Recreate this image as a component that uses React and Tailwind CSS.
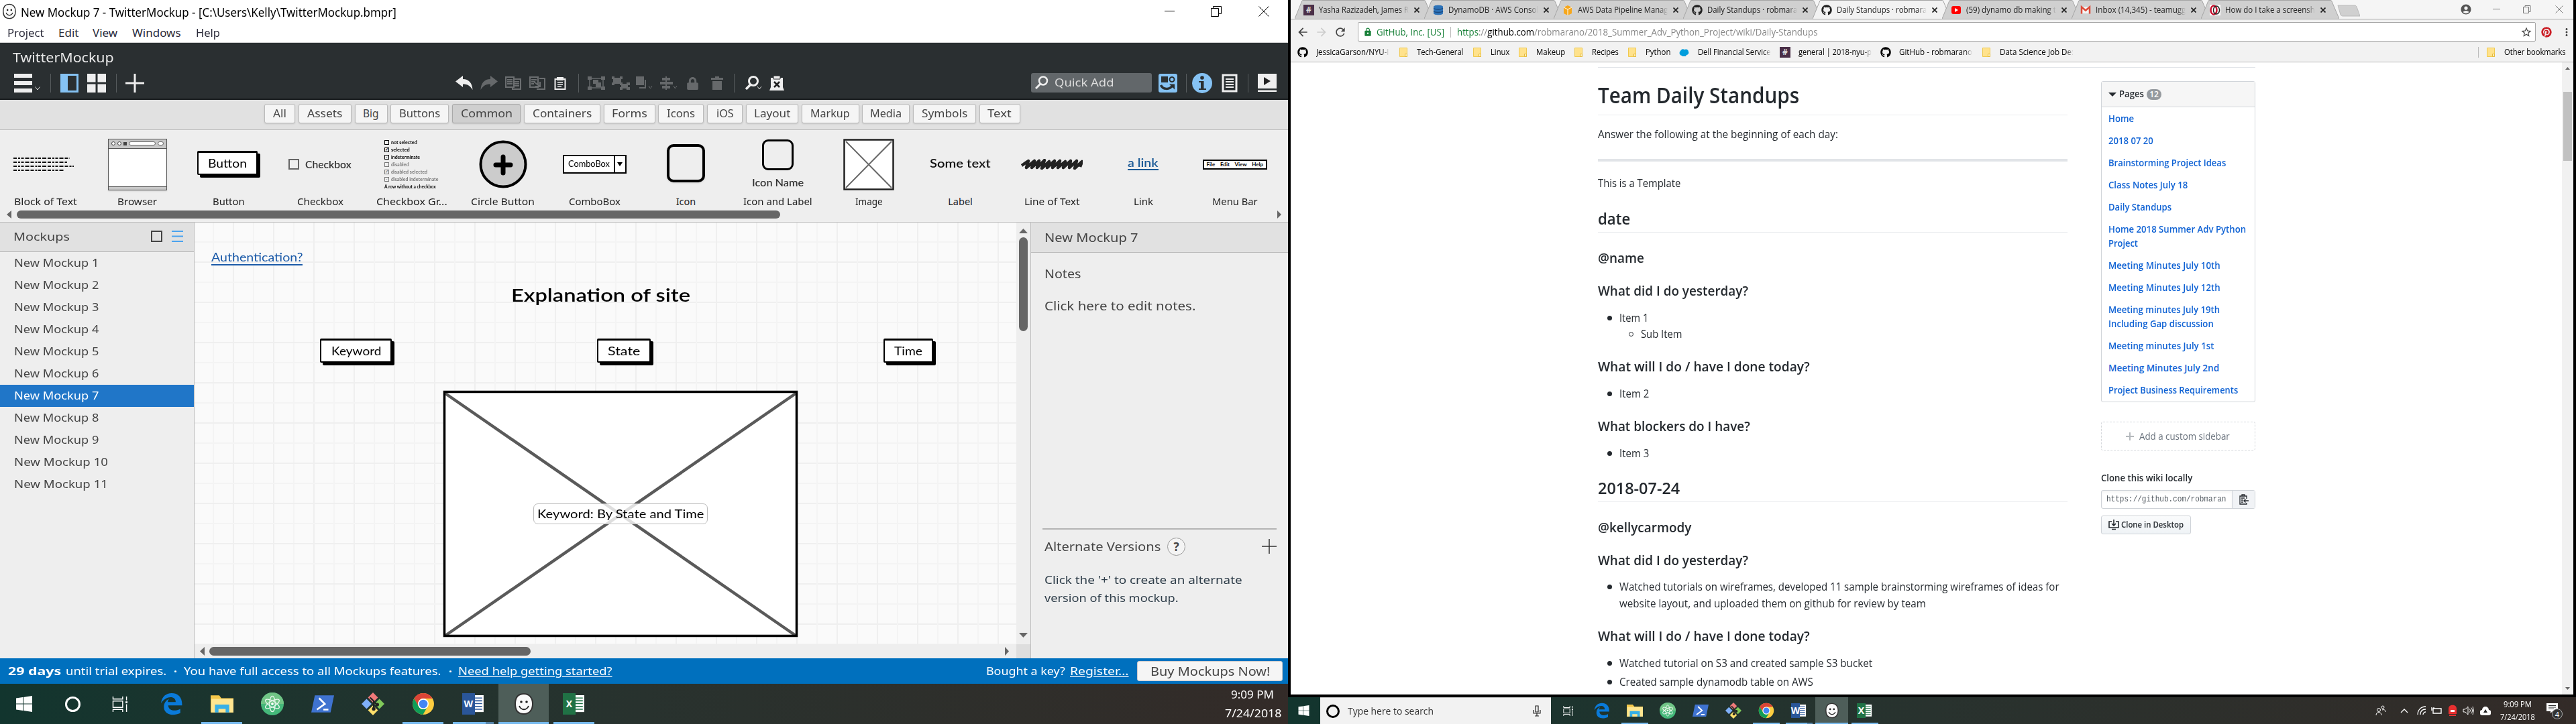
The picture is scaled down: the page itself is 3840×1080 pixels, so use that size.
import React, { useLayoutEffect, useRef } from "react";
import { FaGithub, FaPinterest, FaLock } from "react-icons/fa";
import { MdLock, MdAccountCircle, MdStarBorder, MdRefresh, MdArrowBack, MdArrowForward, MdMoreVert } from "react-icons/md";

/* A line of text that is condensed or stretched to the width of its own box. */
function T({ className = "", children }) {
  const outer = useRef(null);
  const inner = useRef(null);
  useLayoutEffect(() => {
    const natural = inner.current.offsetWidth;
    if (natural) inner.current.style.transform = `scaleX(${outer.current.clientWidth / natural})`;
  }, [children]);
  return (
    <span ref={outer} className={"block shrink-0 whitespace-nowrap " + className}>
      <span ref={inner} className="inline-block origin-left">{children}</span>
    </span>
  );
}

const Svg = ({ className, box, children, ...rest }) => (
  <svg className={"block shrink-0 " + className} viewBox={box} fill="none" {...rest}>{children}</svg>
);
const Sep = ({ className }) => <div className={"h-7 w-px shrink-0 bg-[#565b5d] " + className} />;

function Smiley({ className }) {
  return (
    <Svg className={className} box="0 0 30 34">
      <path d="M15 2C7 2 2 7 2 17s5 15 13 15 13-6 13-15S23 2 15 2z" fill="#fafafa" stroke="#333" strokeWidth="2" />
      <circle cx="11" cy="14" r="1.8" fill="#222" />
      <circle cx="19" cy="14" r="1.8" fill="#222" />
      <path d="M8 20c3 7 11 7 14 0" stroke="#222" strokeWidth="1.8" />
    </Svg>
  );
}

/* ---------- Mockups window ---------- */

function TitleAndMenu() {
  return (
    <>
      <div className="flex h-[34px] items-center pl-[3px] text-[18px] text-black">
        <Smiley className="h-[24px] w-[22px]" />
        <T className="ml-[6px] mt-[3px] w-[560px]">New Mockup 7 - TwitterMockup - [C:\Users\Kelly\TwitterMockup.bmpr]</T>
        <Svg className="ml-[1145px] h-4 w-4" box="0 0 16 16"><path d="M0 7.5h15" stroke="#000" /></Svg>
        <Svg className="ml-[53px] h-4 w-4" box="0 0 16 16"><path d="M.5 3.5h11v12H.5zM3.5 3V.5h12v11H12" stroke="#000" /></Svg>
        <Svg className="ml-[55px] h-4 w-4" box="0 0 16 16"><path d="M.5.5l15 15M15.5.5l-15 15" stroke="#000" /></Svg>
      </div>
      <div className="flex h-[30px] items-center border-b border-[#ccc] pl-[11px] text-[17px] text-[#2b2b3a]">
        <T className="w-[55px]">Project</T>
        <T className="ml-[21px] w-[30px]">Edit</T>
        <T className="ml-[21px] w-[37px]">View</T>
        <T className="ml-[22px] w-[73px]">Windows</T>
        <T className="ml-[22px] w-[36px]">Help</T>
      </div>
    </>
  );
}

function Toolbar() {
  return (
    <div className="h-[85px] border-b-2 border-[#191d1f] bg-[#2a2f31]">
      <div className="flex h-[44px] items-center pl-[19px] text-[20px] text-[#e8e8e8]">
        <T className="w-[151px]">TwitterMockup</T>
      </div>
      <div className="flex h-8 items-center pl-[21px]">
        <Svg className="h-7 w-[27px]" box="0 0 27 28"><path d="M0 0h27v6H0zM0 11h27v6H0zM0 22h27v6H0z" fill="#eee" /></Svg>
        <Svg className="ml-1 mt-4 h-2 w-2" box="0 0 8 8"><path d="M.5 1.5L4 6l3.5-4.5" stroke="#ddd" /></Svg>
        <Sep className="ml-[15px]" />
        <Svg className="ml-[14px] h-7 w-[27px]" box="0 0 27 28"><path d="M0 0h27v28H0z" fill="#85c2f3" /><path d="M11 3h13v22H11z" fill="#2a2f31" /></Svg>
        <Svg className="ml-[13px] h-7 w-7" box="0 0 28 28"><path d="M0 0h12.5v12.5H0zM15.500 0H28v12.5H15.500zM0 15.500h12.5V28H0zM15.500 15.500H28V28H15.500z" fill="#eee" /></Svg>
        <Sep className="ml-[15px]" />
        <Svg className="ml-[13px] h-7 w-7" box="0 0 28 28"><path d="M14 0v28M0 14h28" stroke="#eee" strokeWidth="3" /></Svg>
        <Svg className="ml-[464px] h-[22px] w-[26px]" box="0 0 26 22"><path d="M0 8.5L11 0v5c9 0 14 6 14.500 16C22 15 18 12.5 11 12.5V17z" fill="#eee" /></Svg>
        <Svg className="ml-[11px] h-[22px] w-[26px]" box="0 0 26 22"><path d="M26 8.5L15 0v5C6 5 1 11 .5 21 4 15 8 12.5 15 12.5V17z" fill="#66696b" /></Svg>
        <Svg className="ml-[11px] h-5 w-6" box="0 0 24 20"><path d="M1 1h12v15H1zM13 4h10v15H11v-3M3 5h8M3 8h8M3 11h8M14 8h7M14 11h7M14 14h7" stroke="#6b6e70" strokeWidth="2" /></Svg>
        <Svg className="ml-3 h-5 w-6" box="0 0 24 20"><path d="M1 1h12v15H1zM15 3h8v16H11M3 5h8M3 8h6M3 11h4M7 8l9 7M16 8v7H9" stroke="#6b6e70" strokeWidth="2" /></Svg>
        <Svg className="ml-[13px] h-5 w-[18px]" box="0 0 18 20"><path d="M1.5 4h15v15h-15z" stroke="#eee" strokeWidth="2" /><path d="M4 1h10v5H4z" fill="#eee" /><path d="M5 9h8M5 12h8M5 15h6" stroke="#eee" strokeWidth="1.5" /></Svg>
        <Sep className="ml-[18px]" />
        <Svg className="ml-[13px] h-5 w-[26px]" box="0 0 26 20"><path d="M3 3h20v14H3z" stroke="#66696b" strokeWidth="1.5" /><path d="M0 0h6v5H0zM20 0h6v5h-6zM0 15h6v5H0zM20 15h6v5h-6zM8 5h8v6H8zM12 9h8v7h-8z" fill="#66696b" /></Svg>
        <Svg className="ml-[10px] h-5 w-[27px]" box="0 0 27 20"><path d="M2 2h12v9H2zM14 11h10v7H14z" fill="#66696b" /><path d="M0 0h4v4H0zM12 0h4v4h-4zM0 9h4v4H0zM12 9h4v4h-4zM22 9h5v4h-5zM12 16h4v4h-4zM22 16h5v4h-5z" fill="#66696b" /></Svg>
        <Svg className="ml-[9px] h-5 w-[26px]" box="0 0 26 20"><path d="M0 0h12v13H0z" fill="#66696b" /><path d="M14 5v12H5" stroke="#66696b" strokeWidth="2" /><path d="M19 14l2.500 4 2.500-4" stroke="#66696b" /></Svg>
        <Svg className="ml-[10px] h-5 w-[26px]" box="0 0 26 20"><path d="M9 0v20" stroke="#66696b" strokeWidth="2" /><path d="M3 2h12v4H3zM0 8h19v4H0zM3 14h12v4H3z" fill="#66696b" /><path d="M20 14l2.500 4 2.500-4" stroke="#66696b" /></Svg>
        <FaLock className="ml-[13px] h-[19px] w-[19px] shrink-0 text-[#66696b]" />
        <Svg className="ml-[18px] h-5 w-[18px]" box="0 0 18 20"><path d="M0 2h18v3H0zM6 0h6v2H6zM2 7h14v13H2z" fill="#66696b" /></Svg>
        <Sep className="ml-4" />
        <Svg className="ml-[15px] h-[22px] w-[26px]" box="0 0 26 22"><circle cx="13" cy="8" r="6.5" stroke="#eee" strokeWidth="3" /><path d="M9 13l-7 7" stroke="#eee" strokeWidth="3.5" /><path d="M19 16l3 4 3-4" stroke="#ddd" /></Svg>
        <Svg className="ml-[11px] h-[22px] w-[22px]" box="0 0 22 22"><path d="M2 3h18v14l2 5H0l2-5z" fill="#eee" /><path d="M6 0h10v5H6z" fill="#eee" stroke="#2a2f31" /><path d="M7 9l8 8M15 9l-8 8" stroke="#222" strokeWidth="2.5" /></Svg>
        <div className="-mt-[2px] ml-[368px] flex h-[29px] w-[180px] shrink-0 items-center rounded-[3px] bg-[#62676a] pl-[6px] text-[17px] text-[#ddd]">
          <Svg className="h-5 w-5" box="0 0 20 20"><circle cx="12" cy="7.5" r="6" stroke="#eee" strokeWidth="2.5" /><path d="M8 12l-7 7" stroke="#eee" strokeWidth="3" /></Svg>
          <T className="ml-[9px] w-[89px]">Quick Add</T>
        </div>
        <Svg className="ml-[10px] h-7 w-7" box="0 0 28 28"><rect width="28" height="28" rx="3" fill="#85c2f3" /><path d="M4 4h10v9H4z" fill="#2a2f31" /><circle cx="20" cy="8.5" r="3.500" stroke="#2a2f31" strokeWidth="2" /><path d="M3.500 17c3 7 13 7 17 1" stroke="#2a2f31" strokeWidth="3.500" /><path d="M16 15.500h8v8z" fill="#2a2f31" /></Svg>
        <Sep className="ml-[13px]" />
        <Svg className="ml-2 h-[30px] w-[30px]" box="0 0 30 30"><circle cx="15" cy="15" r="15" fill="#85c2f3" /><circle cx="15" cy="7" r="2.8" fill="#2a2f31" /><path d="M10 12h7.500v11H21v2H10v-2h3v-9h-3z" fill="#2a2f31" /></Svg>
        <Svg className="ml-[14px] h-7 w-6" box="0 0 24 28"><path d="M2 2h20v24H2z" stroke="#eee" strokeWidth="3" /><path d="M6 8h12M6 12h12M6 16h12M6 20h12" stroke="#eee" strokeWidth="2" /></Svg>
        <Sep className="ml-[15px]" />
        <Svg className="ml-[14px] h-7 w-7" box="0 0 28 28"><path d="M0 0h28v22H0zM0 24.500h28V27H0z" fill="#eee" /><path d="M9 5l10 6-10 6z" fill="#222" /></Svg>
      </div>
    </div>
  );
}

const categories = [
  ["All", "w-[46px]", "w-[20px]"],
  ["Assets", "w-[79px]", "w-[53px]"],
  ["Big", "w-[49px]", "w-[24px]"],
  ["Buttons", "w-[87px]", "w-[61px]"],
  ["Common", "w-[102px]", "w-[77px]"],
  ["Containers", "w-[114px]", "w-[88px]"],
  ["Forms", "w-[77px]", "w-[53px]"],
  ["Icons", "w-[68px]", "w-[42px]"],
  ["iOS", "w-[53px]", "w-[26px]"],
  ["Layout", "w-[78px]", "w-[54px]"],
  ["Markup", "w-[86px]", "w-[59px]"],
  ["Media", "w-[71px]", "w-[47px]"],
  ["Symbols", "w-[94px]", "w-[68px]"],
  ["Text", "w-[61px]", "w-[36px]"],
];

function Categories() {
  return (
    <div className="flex h-[45px] items-start gap-[4.75px] border-b border-[#bdbdbd] bg-[#e1e1e1] pl-[394px] pt-[6px] text-[15.5px] text-[#444]">
      {categories.map(([name, box, text]) => (
        <div
          key={name}
          className={
            "flex h-[29px] shrink-0 items-center justify-center rounded-[3px] border shadow-sm " +
            box +
            (name === "Common" ? " border-[#a9a9a9] bg-[#cfcfcf] shadow-inner" : " border-[#bbb] bg-[#f5f5f5]")
          }
        >
          <T className={text}>{name}</T>
        </div>
      ))}
    </div>
  );
}

function SketchButton({ box, text, children }) {
  return (
    <div className={"flex items-center justify-center rounded-[2px] border-2 border-t-[3px] border-black bg-white shadow-[4px_4px_0_0_#000] " + box}>
      <T className={text}>{children}</T>
    </div>
  );
}

const groupRows = [
  ["not selected", "w-[39px]", "text-black", ""],
  ["selected", "w-[28px]", "text-black", "✓"],
  ["indeterminate", "w-[43px]", "text-black", "-"],
  ["disabled", "w-[27px]", "text-[#777]", ""],
  ["disabled selected", "w-[54px]", "text-[#777]", "✓"],
  ["disabled indeterminate", "w-[70px]", "text-[#777]", "-"],
];

const library = [
  ["Block of Text", "w-[94px]",
    <Svg key="a" className="-ml-[6px] h-6 w-[90px]" box="0 0 90 24"><path d="M0 3h84M0 9h80M0 15h90M0 21h76" stroke="#111" strokeWidth="2.2" strokeDasharray="5 2 3 1.5 4 2 6 2" /></Svg>],
  ["Browser", "w-[59px]",
    <div key="a" className="flex h-[77px] w-[88px] flex-col justify-between border border-[#555] bg-white shadow">
      <div className="flex h-[14px] items-center gap-[3px] border-b border-[#555] bg-[#c8c8c8] px-1">
        <i className="size-[6px] rounded-full border border-[#444] bg-white" />
        <i className="size-[6px] rounded-full border border-[#444] bg-white" />
        <i className="size-[5px] bg-[#444]" />
        <i className="h-1.5 w-[40px] rounded-sm border border-[#666] bg-white" />
        <i className="h-1.5 w-[9px] rounded-sm border border-[#666] bg-white" />
      </div>
      <div className="h-[5px] border-t border-[#555] bg-[#c8c8c8]" />
    </div>],
  ["Button", "w-[48px]",
    <div key="a" className="-ml-1 pb-1 font-['Lato'] text-[17px] text-black"><SketchButton box="h-[36px] w-[90px]" text="w-[58px]">Button</SketchButton></div>],
  ["Checkbox", "w-[69px]",
    <div key="a" className="flex items-center gap-[9px] font-['Lato'] text-[15px] font-semibold text-[#333]"><i className="size-[16px] border-2 border-[#666]" /><T className="w-[69px]">Checkbox</T></div>],
  ["Checkbox Gr...", "w-[106px]",
    <div key="a" className="flex w-[82px] flex-col font-['Lato'] text-[8px] font-bold leading-[11px] text-black">
      {groupRows.map(([t, w, c, m]) => (
        <div key={t} className={"flex items-center gap-[3px] " + c}>
          <i className="flex size-[7px] items-center justify-center border border-current text-[6px] not-italic leading-none">{m}</i>
          <T className={w}>{t}</T>
        </div>
      ))}
      <T className="w-[77px]">A row without a checkbox</T>
    </div>],
  ["Circle Button", "w-[95px]",
    <Svg key="a" className="h-[72px] w-[72px]" box="0 0 72 72"><circle cx="36" cy="36" r="33.5" fill="#ccc" stroke="#000" strokeWidth="4" /><path d="M36 25v24M25 37h22" stroke="#000" strokeWidth="7" strokeLinecap="round" /></Svg>],
  ["ComboBox", "w-[77px]",
    <div key="a" className="flex h-[28px] w-[95px] items-center border-2 border-black bg-white pl-[6px] font-['Lato'] text-[13px] text-black">
      <T className="w-[62px]">ComboBox</T>
      <div className="ml-[6px] flex h-full w-[18px] items-center justify-center border-l-2 border-black"><Svg className="h-[6px] w-2" box="0 0 8 6"><path d="M0 0h8L4 6z" fill="#000" /></Svg></div>
    </div>],
  ["Icon", "w-[30px]", <div key="a" className="-mt-1 h-[57px] w-[57px] rounded-[10px] border-4 border-black shadow" />],
  ["Icon and Label", "w-[103px]",
    <div key="a" className="flex flex-col items-center gap-2 font-['Lato'] text-[15px] font-semibold leading-[20px] text-[#333]"><i className="h-[46px] w-[47px] rounded-[9px] border-[3.5px] border-black" /><T className="w-[77px]">Icon Name</T></div>],
  ["Image", "w-[41px]",
    <Svg key="a" className="h-[77px] w-[76px]" box="0 0 76 77"><path d="M1.5 1.5h73v74h-73z" fill="#fff" stroke="#222" strokeWidth="2.5" /><path d="M4 4l68 69M72 4L4 73" stroke="#666" strokeWidth="2" /></Svg>],
  ["Label", "w-[37px]", <T key="a" className="-mt-[3px] w-[91px] font-['Lato'] text-[18px] font-semibold text-[#111]">Some text</T>],
  ["Line of Text", "w-[83px]",
    <Svg key="a" className="h-4 w-[92px]" box="0 0 92 16"><path d="M1 10L11 3 8 13 20 3 16 13 27 3 24 13 35 2 31 14 42 4 39 13 50 3 47 13 58 3 55 13 66 4 63 13 74 3 72 13 83 3 80 14 91 4 88 12" stroke="#222" strokeWidth="4.5" strokeLinejoin="round" /></Svg>],
  ["Link", "w-[29px]", <T key="a" className="-mt-1 w-[46px] border-b-2 border-[#1b5a96] font-['Lato'] text-[17px] font-semibold leading-[19px] text-[#1b5a96]">a link</T>],
  ["Menu Bar", "w-[68px]",
    <div key="a" className="flex h-[15px] w-[96px] items-center justify-around border-2 border-black bg-white font-['Lato'] text-[8px] font-bold leading-none text-black"><span>File</span><span>Edit</span><span>View</span><span>Help</span></div>],
];

const Arrow = ({ className, d }) => <Svg className={className} box="0 0 12 12" preserveAspectRatio="none"><path d={d} fill="#666" /></Svg>;
const LEFT = "M12 0v12L0 6z";
const RIGHT = "M0 0v12l12-6z";
const UP = "M0 12h12L6 0z";
const DOWN = "M0 0h12L6 12z";

function Library() {
  return (
    <div className="h-[138px] border-b border-[#bdbdbd] bg-[#eee]">
      <div className="grid w-[1909px] grid-cols-14 pt-3">
        {library.map(([name, w, art]) => (
          <div key={name} className="flex flex-col items-center">
            <div className="flex h-[78px] items-center">{art}</div>
            <T className={"mt-[6px] text-[14.5px] leading-[20px] text-[#222] " + w}>{name}</T>
          </div>
        ))}
      </div>
      <div className="mt-1 flex h-3 items-center pl-[10px]">
        <Arrow className="h-3 w-[7px]" d={LEFT} />
        <div className="ml-2 h-3 w-[1138px] rounded-full bg-[#666]" />
        <Arrow className="ml-[741px] h-3 w-[6px]" d={RIGHT} />
      </div>
    </div>
  );
}

const mockups = [1, 2, 3, 4, 5, 6, 7, 8, 9, 10, 11];

function MockupList() {
  return (
    <div className="w-[290px] shrink-0 border-r border-[#bdbdbd] bg-[#eee]">
      <div className="flex h-[44px] items-center border-b border-[#b9b9b9] bg-[#e1e1e1] pl-5 text-[17px] text-[#444]">
        <T className="-mt-[2px] w-[84px]">Mockups</T>
        <div className="-mt-[3px] ml-[121px] h-[17px] w-[17px] border-2 border-[#444]" />
        <Svg className="-mt-[3px] ml-[14px] h-[17px] w-[17px]" box="0 0 17 17"><path d="M0 1h17M0 8.5h17M0 16h17" stroke="#4ba3ee" strokeWidth="2" /></Svg>
      </div>
      <div className="text-[16.5px] text-[#444]">
        {mockups.map((n) => (
          <div key={n} className={"flex h-[33px] items-center pl-[21px] " + (n === 7 ? "bg-[#2076c8] text-white" : "")}>
            <T className={n > 9 ? "w-[140px]" : "w-[127px]"}>New Mockup {n}</T>
          </div>
        ))}
      </div>
    </div>
  );
}

const gridLines = Array.from({ length: 41 }, (_, i) => i);

function Canvas() {
  return (
    <div className="flex w-[1247px] shrink-0 flex-col">
      <div className="flex h-[629px]">
        <div className="relative w-[1225px] shrink-0 overflow-hidden bg-[#fafafa] font-['Lato'] text-black">
          <Svg className="h-[629px] w-[1225px]" box="0 0 1225 629">
            {gridLines.map((i) => (
              <g key={i} stroke={i % 2 ? "#efefef" : "#f4f4f4"} strokeWidth="2">
                <path d={`M${28 + i * 30} 0v629`} />
                {i < 21 && <path d={`M0 ${29 + i * 30}h1225`} />}
              </g>
            ))}
            <path d="M372.5 252.5h525v364h-525z" fill="#fff" />
            <path d="M374 255l522 361M896 255L374 616" stroke="#5a5a5a" strokeWidth="4.5" />
            <path d="M372.5 252.5h525v364h-525z" stroke="#000" strokeWidth="3.5" />
          </Svg>
          <T className="absolute left-[25px] top-[41px] w-[136px] border-b-2 border-[#1b5aa8] text-[17px] leading-[21px] text-[#1b5aa8]">Authentication?</T>
          <T className="absolute left-[472px] top-[92px] w-[267px] text-[27px] font-semibold leading-[32px]">Explanation of site</T>
          <div className="absolute left-[187px] top-[173px] text-[17px]"><SketchButton box="h-[36px] w-[107px]" text="w-[74px]">Keyword</SketchButton></div>
          <div className="absolute left-[600px] top-[173px] text-[17px]"><SketchButton box="h-[36px] w-[80px]" text="w-[48px]">State</SketchButton></div>
          <div className="absolute left-[1027px] top-[173px] text-[17px]"><SketchButton box="h-[36px] w-[74px]" text="w-[42px]">Time</SketchButton></div>
          <div className="absolute left-[505px] top-[419px] flex h-[31px] w-[260px] items-center rounded-[7px] border border-[#bbb] bg-white/80 pl-[5px] text-[17px]">
            <T className="w-[248px]">Keyword: By State and Time</T>
          </div>
        </div>
        <div className="flex flex-1 flex-col items-center border-r border-[#bdbdbd] bg-[#eee] pt-[9px]">
          <Arrow className="h-[7px] w-[13px]" d={UP} />
          <div className="mt-[6px] h-[140px] w-[13px] rounded-full bg-[#666]" />
          <Arrow className="mt-[450px] h-[7px] w-[13px]" d={DOWN} />
        </div>
      </div>
      <div className="flex h-[21px] items-center bg-[#eee] pl-2">
        <Arrow className="h-[13px] w-[7px]" d={LEFT} />
        <div className="ml-[7px] h-[13px] w-[479px] rounded-full bg-[#666]" />
        <Arrow className="ml-[707px] h-[13px] w-[6px]" d={RIGHT} />
        <div className="ml-auto h-full w-[22px] border-r border-[#bdbdbd] bg-[#dedede]" />
      </div>
    </div>
  );
}

function Inspector() {
  return (
    <div className="flex-1 bg-[#eee] text-[17.5px] text-[#444]">
      <div className="flex h-[45px] items-center border-b border-[#b9b9b9] bg-[#e1e1e1] pl-5"><T className="w-[139px]">New Mockup 7</T></div>
      <div className="flex flex-col pl-5 pr-[17px]">
        <T className="mt-[18px] w-[54px] leading-[26px]">Notes</T>
        <T className="mt-[22px] w-[226px] leading-[26px]">Click here to edit notes.</T>
        <div className="-ml-[3px] mt-[319px] h-[2px] bg-[#b4b4b4]" />
        <div className="mt-[11px] flex h-[28px] items-center">
          <T className="w-[173px]">Alternate Versions</T>
          <div className="ml-[10px] flex size-[27px] shrink-0 items-center justify-center rounded-full border border-[#999] bg-[#f4f4f4] text-[17px] font-bold leading-none">?</div>
          <Svg className="ml-auto h-[22px] w-[22px]" box="0 0 22 22"><path d="M11 0v22M0 11h22" stroke="#333" strokeWidth="1.5" /></Svg>
        </div>
        <T className="mt-[22px] w-[295px] text-[16.5px] leading-[27px] text-[#2f3e4a]">Click the '+' to create an alternate</T>
        <T className="w-[200px] text-[16.5px] leading-[27px] text-[#2f3e4a]">version of this mockup.</T>
      </div>
    </div>
  );
}

function TrialBar() {
  return (
    <div className="flex h-[38px] items-center bg-[#0070be] pl-3 text-[16.5px] text-white">
      <T className="w-[79px] font-bold">29 days</T>
      <T className="ml-[7px] w-[150px]">until trial expires.</T>
      <T className="ml-[11px] w-[5px] font-bold">·</T>
      <T className="ml-[10px] w-[384px]">You have full access to all Mockups features.</T>
      <T className="ml-[11px] w-[5px] font-bold">·</T>
      <T className="ml-[9px] w-[230px]"><u className="underline-offset-2">Need help getting started?</u></T>
      <T className="ml-[557px] w-[118px]">Bought a key?</T>
      <T className="ml-[7px] w-[88px]"><u className="underline-offset-2">Register...</u></T>
      <div className="ml-3 flex h-[30px] w-[217px] items-center justify-center rounded-[3px] border border-[#ccc] bg-[#f5f5f5] text-[17.5px] text-[#444]">
        <T className="w-[178px]">Buy Mockups Now!</T>
      </div>
    </div>
  );
}

/* ---------- Taskbar pieces ---------- */

const WindowsLogo = ({ className }) => (
  <Svg className={className} box="0 0 24 24"><path d="M0 3.5l10-1.4v9.4H0zM11 2l13-2v11.5H11zM0 12.5h10V22L0 20.5zM11 12.5h13V24l-13-2z" fill="#fff" /></Svg>
);
const TaskView = ({ className }) => (
  <Svg className={className} box="0 0 25 24"><path d="M1 0v4h15V0M1 24v-4h15v4M1 7h15v10H1zM22 0v6M22 12v12" stroke="#fff" strokeWidth="1.5" /><path d="M20.5 7.5h3v3h-3z" fill="#fff" /></Svg>
);
const Edge = () => (
  <Svg className="h-full w-full" box="0 0 32 32"><path d="M1 15C2 6 8 1 16 1c9 0 15 6 14.5 17H11c.5 8 10 9 17 5v6C17 34 5 31 5 20c0-5 3-9 7-11-1 2-1.5 3-1.5 4.5h11C22 4 8 4 1 15z" fill="#0a7ad9" /></Svg>
);
const Explorer = () => (
  <Svg className="h-full w-full" box="0 0 32 32"><path d="M0 4h12l3 4h17v20H0z" fill="#f5c84a" /><path d="M1 9h31v19H1z" fill="#ffe690" /><path d="M6 28V17h20v11h-5v-5H11v5z" fill="#38b0e6" /></Svg>
);
const Atom = () => (
  <Svg className="h-full w-full" box="0 0 32 32"><circle cx="16" cy="16" r="16" fill="#45b87a" /><path d="M0 16a16 16 0 0132 0z" fill="#71c486" /><g stroke="#e9f7ee" strokeWidth="1.2"><ellipse cx="16" cy="16" rx="4" ry="11" /><ellipse cx="16" cy="16" rx="4" ry="11" transform="rotate(60 16 16)" /><ellipse cx="16" cy="16" rx="4" ry="11" transform="rotate(120 16 16)" /></g><circle cx="16" cy="16" r="1.8" fill="#fff" /></Svg>
);
const PowerShell = () => (
  <Svg className="h-full w-full" box="0 0 32 32"><path d="M5 4h27l-5 24H0z" fill="#3f73d0" /><path d="M11 8l8 8-11 8M17 24h7" stroke="#fff" strokeWidth="2.5" /></Svg>
);
const Git = () => (
  <Svg className="h-full w-full" box="0 0 32 32"><path d="M16 0l7 7-7 7-7-7z" fill="#f07a7a" /><path d="M25 9l7 7-7 7-7-7z" fill="#80c95a" /><path d="M16 18l7 7-7 7-7-7z" fill="#ffe06b" /><path d="M7 9l7 7-7 7-7-7z" fill="#7fb0fa" /><path d="M12 7l5 5v11M17 13l6 5" stroke="#222" strokeWidth="2" /><circle cx="17" cy="23" r="2.5" fill="#222" /><circle cx="22" cy="17" r="2.5" fill="#222" /></Svg>
);
const Chrome = () => (
  <Svg className="h-full w-full" box="0 0 32 32"><circle cx="16" cy="16" r="15" fill="#fdcd40" /><path d="M3 8.5A15 15 0 0129 8.5H16a7.500 7.500 0 00-6.5 11z" fill="#db4437" /><path d="M3 8.5A15 15 0 0015.500 31l6.5-11a7 7 0 01-12.5-.5z" fill="#0f9d58" /><circle cx="16" cy="16" r="7.5" fill="#fff" /><circle cx="16" cy="16" r="6" fill="#4285f4" /></Svg>
);
const Office = ({ letter, tone, line }) => (
  <div className="flex h-full w-full items-center">
    <div className={"flex h-[94%] w-[58%] items-center justify-center text-[14px] font-bold leading-none text-white " + tone}>{letter}</div>
    <Svg className="h-[74%] w-[38%]" box="0 0 12 24" preserveAspectRatio="none"><path d="M0 0h12v24H0z" fill="#fff" /><path d="M0 4h10M0 8h10M0 12h10M0 16h10M0 20h10" stroke={line} strokeWidth="1.5" /></Svg>
  </div>
);

const apps = [
  ["edge", <Edge key="i" />, ""],
  ["explorer", <Explorer key="i" />, "bg-[#76b9ed]"],
  ["atom", <Atom key="i" />, ""],
  ["powershell", <PowerShell key="i" />, ""],
  ["git", <Git key="i" />, ""],
  ["chrome", <Chrome key="i" />, "bg-[#76b9ed]"],
  ["word", <Office key="i" letter="W" tone="bg-[#2a5699]" line="#2a5699" />, "bg-linear-to-r from-[#76b9ed] from-80% to-[#5583a8] to-80%"],
  ["mockups", <Smiley key="i" className="h-full w-full" />, "bg-[#76b9ed]"],
  ["excel", <Office key="i" letter="X" tone="bg-[#207245]" line="#207245" />, "bg-[#76b9ed]"],
];

function Apps({ cell, icon, line, thick }) {
  return apps.map(([id, art, bar]) => (
    <div key={id} className={"flex h-full shrink-0 flex-col items-center justify-between " + cell + (id === "mockups" ? " bg-[#4e5e59]" : "")}>
      <div className={thick} />
      <div className={icon}>{art}</div>
      <div className={thick + " " + (id === "mockups" ? "w-full" : line) + " " + bar} />
    </div>
  ));
}

function MockupsScreen() {
  return (
    <div className="flex w-[1920px] shrink-0 flex-col bg-white font-['Noto_Sans','Open_Sans',sans-serif]">
      <TitleAndMenu />
      <Toolbar />
      <Categories />
      <Library />
      <div className="flex h-[650px] bg-[#eee]">
        <MockupList />
        <Canvas />
        <Inspector />
      </div>
      <TrialBar />
      <div className="flex h-[60px] items-center bg-linear-to-r from-[#12352e] via-[#28322e] to-[#332b28] text-white">
        <WindowsLogo className="ml-6 h-6 w-6" />
        <div className="ml-[49px] size-[23px] shrink-0 rounded-full border-[3px] border-white" />
        <TaskView className="ml-[47px] h-[23px] w-[25px]" />
        <div className="w-[26px] shrink-0" />
        <Apps cell="w-[75px]" icon="size-[34px]" thick="h-[3px]" line="w-[61px]" />
        <div className="ml-auto flex w-[94px] flex-col text-[16.5px] leading-[28px]">
          <T className="ml-[9px] w-[64px]">9:09 PM</T>
          <T className="w-[84px]">7/24/2018</T>
        </div>
      </div>
    </div>
  );
}

/* ---------- Browser window ---------- */

const Slack = () => <div className="flex size-4 shrink-0 items-center justify-center bg-[#4a2f48] text-[12px] font-bold leading-none text-[#ddd]">#</div>;
const Folder = ({ className = "" }) => <Svg className={"h-[14px] w-[12px] " + className} box="0 0 12 14"><path d="M.5.5h11v13H.5z" fill="#ffe28c" stroke="#efc94f" /><path d="M8.5 9.5h3v4h-3z" fill="#fff0b8" stroke="#e5b93c" /></Svg>;

const tabs = [
  ["Yasha Razizadeh, James R", <Slack key="i" />],
  ["DynamoDB · AWS Consol", <Svg key="i" className="size-4" box="0 0 16 16"><path d="M1 3c0-3 14-3 14 0v10c0 3-14 3-14 0z" fill="#2e73b8" /><path d="M1 5.5c3 2 11 2 14 0M1 10c3 2 11 2 14 0" stroke="#1c4a80" strokeWidth="1.5" /></Svg>],
  ["AWS Data Pipeline Manag", <Svg key="i" className="size-4" box="0 0 16 16"><path d="M2 4l6-3 6 3v9l-6 3-6-3z" fill="#f6a71c" /><path d="M2 4l6 3 6-3M8 7v9" stroke="#fff" /></Svg>],
  ["Daily Standups · robmara", <FaGithub key="i" className="size-4 shrink-0" />],
  ["Daily Standups · robmara", <FaGithub key="i" className="size-4 shrink-0" />],
  ["(59) dynamo db making t", <Svg key="i" className="size-4" box="0 0 16 16"><rect x="1" y="2" width="14" height="12" rx="3" fill="#f00" /><path d="M6 5l5 3-5 3z" fill="#fff" /></Svg>],
  ["Inbox (14,345) - teamugg", <Svg key="i" className="size-4" box="0 0 16 16"><path d="M1 3h14v10H1z" fill="#f4f4f4" /><path d="M2 13.5v-10l6 5 6-5v10" stroke="#dd4b39" strokeWidth="2.5" /></Svg>],
  ["How do I take a screensh", <Svg key="i" className="size-4" box="0 0 16 16"><path d="M0 0h16v16H0z" fill="#fff" /><ellipse cx="6" cy="8" rx="4.5" ry="6.5" stroke="#c8102e" strokeWidth="2.5" /><ellipse cx="10" cy="8" rx="4.5" ry="6" stroke="#222" strokeWidth="1.5" /></Svg>],
];

function Tab({ active, title, icon }) {
  return (
    <div className="relative -mr-[13px] flex h-[28px] w-[206px] shrink-0 items-center pl-[13px]">
      <Svg className="absolute inset-0 h-[28px] w-[206px]" box="0 0 206 28">
        <path d="M0 28L11 1Q11.5 .5 12 .5H193q1 0 1.5 .5L206 28z" fill={active ? "#f2f2f2" : "#d0d0d0"} />
        <path d="M0 28L11 1Q11.5 .5 12 .5H193q1 0 1.5 .5L206 28" stroke="#a5a5a5" />
      </Svg>
      <div className="relative mt-[2px] flex items-center">
        {icon}
        <T className="ml-[7px] w-[134px] mask-r-from-90%">{title}</T>
        <Svg className="ml-2 h-2 w-2" box="0 0 8 8"><path d="M.5.5l7 7M7.5.5l-7 7" stroke="#222" strokeWidth="1.8" /></Svg>
      </div>
    </div>
  );
}

function BrowserTop() {
  return (
    <div className="flex h-[93px] flex-col border-b border-[#b5b5b5] bg-[#f2f2f2] text-[12px] text-[#222]">
      <div className="flex h-[28px] shrink-0 items-center bg-[#f5f5f5] pl-[6px]">
        {tabs.map(([title, icon], i) => <Tab key={i} active={i === 4} title={title} icon={icon} />)}
        <Svg className="ml-[10px] mt-[3px] h-[18px] w-[34px]" box="0 0 34 18"><path d="M1 1h25q2 0 3 2l5 14H8q-2 0-3-2z" fill="#d0d0d0" stroke="#bbb" /></Svg>
        <MdAccountCircle className="ml-[149px] size-[18px] shrink-0 text-[#555]" />
        <Svg className="ml-[31px] h-3 w-3" box="0 0 12 12"><path d="M0 5.5h11" stroke="#777" /></Svg>
        <Svg className="ml-[33px] h-3 w-3" box="0 0 12 12"><path d="M.5 2.5h8v9h-8zM3 2V.5h8v9H9" stroke="#777" /></Svg>
        <Svg className="ml-[36px] h-3 w-3" box="0 0 12 12"><path d="M.5.5l11 11M11.5.5l-11 11" stroke="#777" /></Svg>
      </div>
      <div className="flex h-[38px] shrink-0 items-center border-t border-[#a8a8a8] pl-2">
        <MdArrowBack className="size-5 shrink-0 text-[#444]" />
        <MdArrowForward className="ml-2 size-5 shrink-0 text-[#ccc]" />
        <MdRefresh className="ml-2 size-5 shrink-0 text-[#444]" />
        <div className="ml-4 flex h-[29px] w-[1756px] shrink-0 items-center rounded-[2px] border border-[#a8a8a8] bg-white pl-[7px] text-[14px] text-[#888]">
          <MdLock className="size-[14px] shrink-0 text-[#188038]" />
          <T className="ml-[6px] w-[101px] text-[#188038]">GitHub, Inc. [US]</T>
          <div className="ml-[9px] h-4 w-px bg-[#bbb]" />
          <T className="ml-[9px] w-[538px]"><span className="text-[#188038]">https</span>://<span className="text-black">github.com</span>/robmarano/2018_Summer_Adv_Python_Project/wiki/Daily-Standups</T>
          <MdStarBorder className="ml-auto mr-1 size-[18px] text-[#444]" />
        </div>
        <FaPinterest className="ml-2 size-4 shrink-0 rounded-full text-[#cb2027]" />
        <MdMoreVert className="ml-[13px] size-[18px] shrink-0 text-[#444]" />
      </div>
      <div className="flex h-6 items-center pl-[10px] text-black">
        <FaGithub className="size-4 shrink-0" />
        <T className="ml-3 w-[109px] mask-r-from-90%">JessicaGarson/NYU-I</T>
        <Folder className="ml-[15px]" />
        <T className="ml-[14px] w-[69px]">Tech-General</T>
        <Folder className="ml-[15px]" />
        <T className="ml-[14px] w-[28px]">Linux</T>
        <Folder className="ml-[14px]" />
        <T className="ml-[14px] w-[43px]">Makeup</T>
        <Folder className="ml-[14px]" />
        <T className="ml-[14px] w-[40px]">Recipes</T>
        <Folder className="ml-[14px]" />
        <T className="ml-[14px] w-[37px]">Python</T>
        <Svg className="ml-[13px] h-3 w-4" box="0 0 16 12"><path d="M4 11a4 4 0 01-2-7 4 4 0 016-2 4 4 0 016 3 3.5 3.5 0 01-3 5 4 4 0 01-7 1z" fill="#009ddc" /></Svg>
        <T className="ml-3 w-[109px] mask-r-from-90%">Dell Financial Service</T>
        <div className="ml-[13px]"><Slack /></div>
        <T className="ml-3 w-[109px] mask-r-from-90%">general | 2018-nyu-p</T>
        <FaGithub className="ml-[13px] size-4 shrink-0" />
        <T className="ml-3 w-[109px] mask-r-from-90%">GitHub - robmarano</T>
        <Folder className="ml-[15px]" />
        <T className="ml-[14px] w-[110px] mask-r-from-90%">Data Science Job De:</T>
        <div className="ml-[603px] h-4 w-px bg-[#bbb]" />
        <Folder className="ml-[12px]" />
        <T className="ml-[14px] w-[92px]">Other bookmarks</T>
      </div>
    </div>
  );
}

const H3 = ({ className, w, children }) => <T className={"h-6 text-[20px] font-semibold leading-6 " + className + " " + w}>{children}</T>;
function Bullet({ className = "", w, children, hollow }) {
  return (
    <div className={"flex h-6 items-center leading-6 " + className + (hollow ? " pl-[46px]" : " pl-[14px]")}>
      <i className={hollow ? "size-[7px] rounded-full border border-[#24292e]" : "size-[7px] rounded-full bg-[#24292e]"} />
      <T className={"ml-[11px] " + w}>{children}</T>
    </div>
  );
}

function Article() {
  return (
    <div className="flex w-[700px] shrink-0 flex-col text-[16px]">
      <div className="mt-[18px] h-[53px] border-b border-[#eaecef]"><T className="w-[300px] text-[32px] font-semibold leading-[46px]">Team Daily Standups</T></div>
      <T className="mt-[16px] w-[358px] leading-6">Answer the following at the beginning of each day:</T>
      <div className="mt-[25px] h-1 bg-[#e1e4e8]" />
      <T className="mt-[20px] w-[123px] leading-6">This is a Template</T>
      <div className="mt-[26px] h-[36px] border-b border-[#eaecef]"><T className="w-[48px] text-[24px] font-semibold leading-[29px]">date</T></div>
      <H3 className="mt-[26px]" w="w-[69px]">@name</H3>
      <H3 className="mt-[25px]" w="w-[224px]">What did I do yesterday?</H3>
      <Bullet className="mt-4" w="w-[43px]">Item 1</Bullet>
      <Bullet hollow w="w-[62px]">Sub Item</Bullet>
      <H3 className="mt-[25px]" w="w-[316px]">What will I do / have I done today?</H3>
      <Bullet className="mt-4" w="w-[44px]">Item 2</Bullet>
      <H3 className="mt-[25px]" w="w-[227px]">What blockers do I have?</H3>
      <Bullet className="mt-4" w="w-[44px]">Item 3</Bullet>
      <div className="mt-[25px] h-[36px] border-b border-[#eaecef]"><T className="w-[122px] text-[24px] font-semibold leading-[29px]">2018-07-24</T></div>
      <H3 className="mt-[26px]" w="w-[139px]">@kellycarmody</H3>
      <H3 className="mt-[25px]" w="w-[224px]">What did I do yesterday?</H3>
      <Bullet className="mt-[15px]" w="w-[656px]">Watched tutorials on wireframes, developed 11 sample brainstorming wireframes of ideas for</Bullet>
      <T className="ml-8 mt-px w-[457px] leading-6">website layout, and uploaded them on github for review by team</T>
      <H3 className="mt-[25px]" w="w-[316px]">What will I do / have I done today?</H3>
      <Bullet className="mt-4" w="w-[377px]">Watched tutorial on S3 and created sample S3 bucket</Bullet>
      <Bullet className="mt-1" w="w-[289px]">Created sample dynamodb table on AWS</Bullet>
    </div>
  );
}

const pages = [
  [["Home", "w-[38px]"]],
  [["2018 07 20", "w-[67px]"]],
  [["Brainstorming Project Ideas", "w-[175px]"]],
  [["Class Notes July 18", "w-[118px]"]],
  [["Daily Standups", "w-[94px]"]],
  [["Home 2018 Summer Adv Python", "w-[205px]"], ["Project", "w-[44px]"]],
  [["Meeting Minutes July 10th", "w-[167px]"]],
  [["Meeting Minutes July 12th", "w-[167px]"]],
  [["Meeting minutes July 19th", "w-[166px]"], ["Including Gap discussion", "w-[157px]"]],
  [["Meeting minutes July 1st", "w-[157px]"]],
  [["Meeting Minutes July 2nd", "w-[165px]"]],
  [["Project Business Requirements", "w-[193px]"]],
];

function WikiSidebar() {
  return (
    <div className="ml-[50px] mt-5 flex w-[230px] shrink-0 flex-col text-[13.5px]">
      <div className="rounded-[3px] border border-[#d1d5da]">
        <div className="flex h-[38px] items-center border-b border-[#d1d5da] bg-[#f6f6f6] pl-[10px] font-semibold">
          <Svg className="h-[6px] w-3" box="0 0 12 6"><path d="M0 0h12L6 6z" fill="#24292e" /></Svg>
          <T className="ml-1 w-[37px]">Pages</T>
          <div className="ml-1 flex h-4 w-[22px] items-center justify-center rounded-full bg-[#959a9f] text-[12px] leading-none text-white">12</div>
        </div>
        <div className="pl-[10px] pt-px font-semibold text-[#0f62d4]">
          {pages.map((lines) => (
            <div key={lines[0][0]} className="py-1.5 leading-[21px]">
              {lines.map(([t, w]) => <T key={t} className={"h-[21px] " + w}>{t}</T>)}
            </div>
          ))}
        </div>
      </div>
      <div className="mt-[29px] flex h-[43px] items-center rounded-[3px] border border-dashed border-[#d5d8dc] pl-[36px] text-[14px] text-[#6a737d]">
        <Svg className="h-3 w-3" box="0 0 12 12"><path d="M6 0v12M0 6h12" stroke="#b5b9bd" strokeWidth="2" /></Svg>
        <T className="ml-2 w-[135px]">Add a custom sidebar</T>
      </div>
      <T className="mt-[31px] w-[136px] font-semibold leading-5">Clone this wiki locally</T>
      <div className="mt-2 flex h-7 rounded-[3px] border border-[#cfd3d8]">
        <div className="flex w-[194px] items-center pl-[7px] font-['Liberation_Mono'] text-[12px] text-[#555c63] shadow-inner"><T className="w-[178px]">https://github.com/robmaran</T></div>
        <div className="flex flex-1 items-center justify-center border-l border-[#cfd3d8] bg-[#f1f3f6]">
          <Svg className="h-4 w-[14px]" box="0 0 14 16"><path d="M11 7V3H1v12h10v-2M4 3V1h4v2M3 6h5M3 9h3M3 12h3M14 10H7M9.5 7.5L7 10l2.5 2.5" stroke="#24292e" strokeWidth="1.3" /></Svg>
        </div>
      </div>
      <div className="mt-[10px] flex h-7 w-[134px] items-center rounded-[3px] border border-[#cfd3d8] bg-linear-to-b from-[#fafbfc] to-[#eff3f6] pl-[10px] text-[12px] font-semibold">
        <Svg className="h-4 w-4" box="0 0 16 16"><path d="M5 3H1v9h14V3h-4M8 0v8M5 6l3 3 3-3M5 14.5h6" stroke="#24292e" strokeWidth="1.6" /></Svg>
        <T className="ml-[3px] w-[93px]">Clone in Desktop</T>
      </div>
    </div>
  );
}

function Tray() {
  return (
    <>
      <Svg className="ml-auto h-4 w-4" box="0 0 16 16"><circle cx="5" cy="7" r="2.5" stroke="#fff" /><circle cx="11" cy="3" r="2" stroke="#fff" /><path d="M1 15c0-6 8-6 8 0M10 7c3-1 5 0 5 3" stroke="#fff" /></Svg>
      <Svg className="ml-[21px] h-[7px] w-3" box="0 0 12 7"><path d="M1 6l5-5 5 5" stroke="#fff" strokeWidth="1.3" /></Svg>
      <Svg className="ml-[13px] h-3.5 w-3.5" box="0 0 14 14"><path d="M1 13C1 6 6 1 13 1M5 13c0-5 3-8 8-8M9 13c0-2 2-4 4-4" stroke="#fff" strokeWidth="1.3" /></Svg>
      <Svg className="ml-[7px] h-3 w-4" box="0 0 16 12"><path d="M3 3h12v7H3zM1 1v5M4 1v3" stroke="#fff" strokeWidth="1.4" /></Svg>
      <Svg className="ml-[9px] h-[18px] w-3.5" box="0 0 14 18"><path d="M1 6c0-7 12-7 12 0v8H1zM2 15h10v2H2z" fill="#e83030" /><path d="M4 8h6v3H4z" fill="#fff" /></Svg>
      <Svg className="ml-2 h-3.5 w-[17px]" box="0 0 17 14"><path d="M1 5h3l4-4v12L4 9H1zM10.5 4.5q2 2.5 0 5M12.5 2.5q4 4.5 0 9M15 1q3 6 0 12" stroke="#fff" /></Svg>
      <Svg className="ml-[9px] h-4 w-4" box="0 0 16 16"><path d="M4 15a4 4 0 01-1-8 5 5 0 0110 0 4 4 0 01-1 8z" fill="#fff" /><path d="M8 6l3 5H5z" fill="#222" /></Svg>
      <div className="ml-[14px] flex w-[52px] shrink-0 flex-col text-[12px] leading-[19px]">
        <T className="ml-[5px] w-[42px]">9:09 PM</T>
        <T className="w-[52px]">7/24/2018</T>
      </div>
      <div className="relative ml-[17px] mr-[20px] h-[22px] w-6 shrink-0">
        <Svg className="h-[15px] w-[17px]" box="0 0 17 15"><path d="M0 0h17v12h-8l-3 3v-3H0z" fill="#fff" /><path d="M3 3.5h11M3 6h11M3 8.5h8" stroke="#333" /></Svg>
        <div className="absolute left-[8px] top-[8px] flex size-[16px] items-center justify-center rounded-full border border-[#aaa] bg-[#333] text-[11px] leading-none">4</div>
      </div>
    </>
  );
}

function BrowserScreen() {
  return (
    <div className="flex w-[1920px] shrink-0 flex-col bg-black font-['Open_Sans','Noto_Sans',sans-serif] text-[#24292e]">
      <div className="ml-1 flex h-[1036px] w-[1912px] flex-col bg-white">
        <BrowserTop />
        <div className="flex h-[943px] overflow-hidden">
          <div className="ml-[458px] mt-[7px] w-[980px] shrink-0">
            <div className="h-px bg-[#e1e4e8]" />
            <div className="flex">
              <Article />
              <WikiSidebar />
            </div>
          </div>
          <div className="ml-auto flex w-[17px] flex-col items-center bg-[#f1f1f1] pt-[7px]">
            <Arrow className="h-[4px] w-[7px]" d={UP} />
            <div className="mt-[33px] h-[103px] w-[13px] bg-[#c1c1c1]" />
            <Arrow className="mb-[7px] mt-auto h-[4px] w-[7px]" d={DOWN} />
          </div>
        </div>
      </div>
      <div className="mt-1 flex h-10 items-center bg-linear-to-r from-[#12352e] via-[#28322e] to-[#332b28] text-white">
        <WindowsLogo className="ml-[15px] h-4 w-[17px]" />
        <div className="ml-4 flex h-10 w-[344px] shrink-0 items-center border-t border-[#bbb] bg-[#f2f2f2] pl-[9px] text-[15px] text-[#333]">
          <div className="size-[20px] shrink-0 rounded-full border-[3px] border-black" />
          <T className="ml-3 w-[128px]">Type here to search</T>
          <Svg className="ml-[148px] h-[17px] w-3" box="0 0 12 17"><path d="M4 1h4v9H4zM1 7v5h10V7M6 12v4M3 16h6" stroke="#222" strokeWidth="1.2" /></Svg>
        </div>
        <TaskView className="ml-[18px] h-[15px] w-4" />
        <div className="w-[17px] shrink-0" />
        <Apps cell="w-[49px]" icon="size-[24px]" thick="h-[2px]" line="w-[40px]" />
        <Tray />
      </div>
    </div>
  );
}

export default function App() {
  return (
    <div className="flex h-[1080px] w-[3840px] overflow-hidden bg-black">
      <MockupsScreen />
      <BrowserScreen />
    </div>
  );
}
